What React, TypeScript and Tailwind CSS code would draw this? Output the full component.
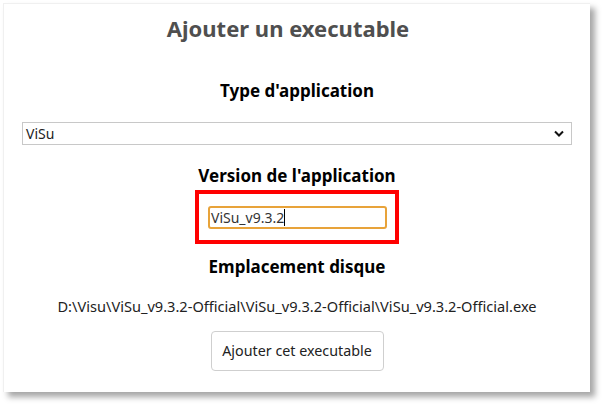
export default function App() {
  const font = { fontFamily: '"Noto Sans", "Open Sans", Arial, sans-serif' };

  return (
    <div className="w-[603px] h-[404px] bg-white pt-[3px] pl-[3px]" style={font}>
      <div className="w-[587px] h-[389px] bg-white border-t border-l border-[#f0f0f0] shadow-[5px_5px_6px_rgba(0,0,0,0.35)] flex flex-col items-center">
        <h1 className="mt-[9px] mr-[18px] text-[22px] leading-[30px] font-bold text-[#4f4f4f]">
          Ajouter un executable
        </h1>

        <h2 className="mt-[36px] text-[17px] leading-[24px] font-bold text-black">
          Type d'application
        </h2>

        {/* Select */}
        <div className="mt-[19px] self-stretch ml-[18px] mr-[18px] h-[23px] border border-[#c8c8c8] flex items-center justify-between pl-[3px] pr-[7px]">
          <span className="text-[14px] text-[#222]">ViSu</span>
          <svg width="10" height="7" viewBox="0 0 10 7">
            <path d="M1 1.5 L5 5.5 L9 1.5" fill="none" stroke="#111" strokeWidth="2" />
          </svg>
        </div>

        <h2 className="mt-[19px] text-[17px] leading-[24px] font-bold text-black">
          Version de l'application
        </h2>

        {/* Highlighted input */}
        <div className="mt-[2px] w-[204px] h-[54px] border-4 border-[#ff0000] pt-[12px] pl-[9px]">
          <div className="w-[179px] h-[23px] border-2 border-[#e8a33a] rounded-[3px] flex items-center pl-px">
            <span className="text-[14px] text-[#333] leading-none">ViSu_v9.3.2</span>
            <span className="w-px h-[17px] bg-black" />
          </div>
        </div>

        <h2 className="mt-[11px] text-[17px] leading-[24px] font-bold text-black">
          Emplacement disque
        </h2>

        <p className="mt-[17px] text-[14.6px] leading-[20px] text-[#222]">
          D:\Visu\ViSu_v9.3.2-Official\ViSu_v9.3.2-Official\ViSu_v9.3.2-Official.exe
        </p>

        <button className="mt-[15px] w-[173px] h-[40px] border border-[#cfcfcf] rounded-[4px] bg-white text-[14.3px] text-[#222]">
          Ajouter cet executable
        </button>
      </div>
    </div>
  );
}
